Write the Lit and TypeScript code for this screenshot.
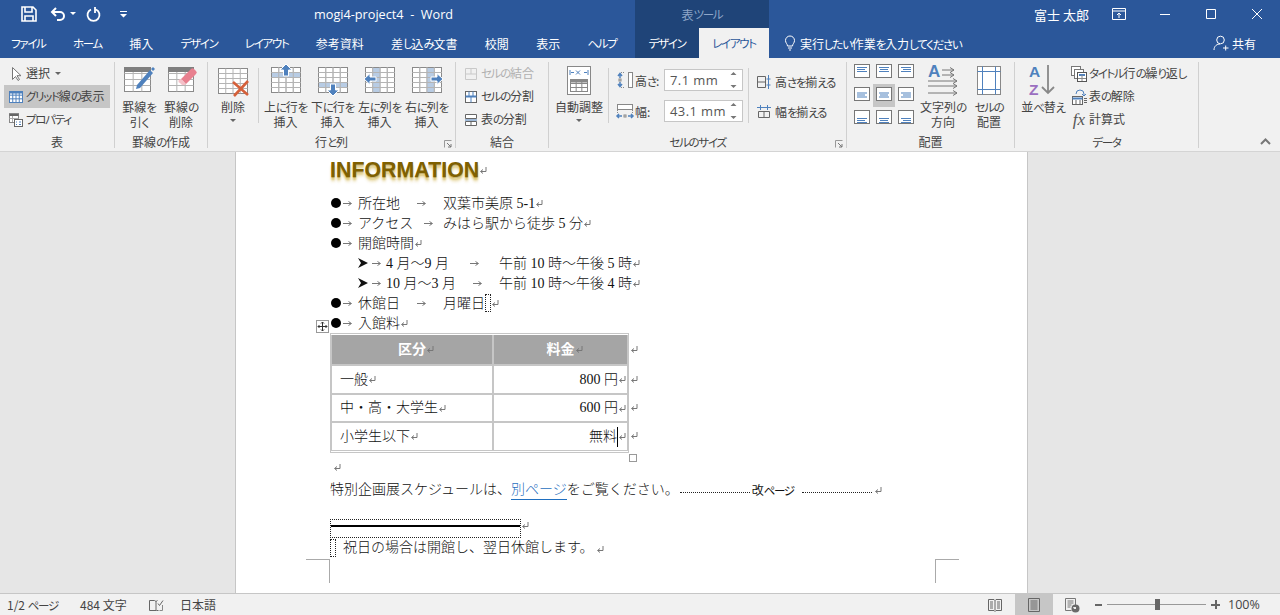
import { LitElement, html, css, svg } from "lit";
import { customElement } from "lit/decorators.js";

const G = "#8a8a8a";
const L = "#b4b4b4";
const B = "#4f81bd";
const BAND = "#b8cce4";

const K = (s: string) => s.split(/([\u3040-\u30ff]+)/).map((p, i) => (i % 2 ? html`<span class="kn">${p}</span>` : p));

const grid = (x: number, y: number, w: number, h: number, cols: number, rows: number, c = L) => {
  const parts: unknown[] = [];
  for (let i = 1; i < cols; i++) {
    const px = x + (w * i) / cols;
    parts.push(svg`<line x1=${px} x2=${px} y1=${y} y2=${y + h} stroke=${c}/>`);
  }
  for (let j = 1; j < rows; j++) {
    const py = y + (h * j) / rows;
    parts.push(svg`<line x1=${x} x2=${x + w} y1=${py} y2=${py} stroke=${c}/>`);
  }
  return parts;
};

const tableBox = (x: number, y: number, w: number, h: number, cols: number, rows: number) => svg`
  <rect x=${x + 0.5} y=${y + 0.5} width=${w} height=${h} fill="#fff" stroke=${G}/>
  ${grid(x + 0.5, y + 0.5, w, h, cols, rows)}`;

const big = (content: unknown) => html`<svg class="i32" viewBox="0 0 32 32">${content}</svg>`;
const small = (content: unknown) => html`<svg class="i16" viewBox="0 0 16 16">${content}</svg>`;

const icons = {
  save: html`<svg class="qat" viewBox="0 0 16 16"><path d="M1 1h11l3 3v11H1z M4 1v5h7V1 M4 15v-5h8v5" fill="none" stroke="#fff" stroke-width="1.6"/></svg>`,
  undo: html`<svg class="qat" viewBox="0 0 16 16"><path d="M2 6h8a4 4 0 0 1 0 8H7 M6 2L2 6l4 4" fill="none" stroke="#fff" stroke-width="2"/></svg>`,
  redo: html`<svg class="qat" viewBox="0 0 16 16"><path d="M5 3.500a6 6 0 1 0 5 0 M9 1v6" fill="none" stroke="#fff" stroke-width="1.8"/></svg>`,
  caret: html`<svg class="car" viewBox="0 0 6 4"><path d="M0 0h6L3 3z" fill="currentColor"/></svg>`,
  qatDrop: html`<svg class="car2" viewBox="0 0 7 7"><path d="M0 0h7v1H0z M0 3h7L3.500 6.500z" fill="#fff"/></svg>`,
  display: html`<svg class="i16" viewBox="0 0 16 16"><path d="M1.500 2.500h13v11h-13z M1.500 5h13 M8 12V7 M6 9l2-2 2 2" fill="none" stroke="#fff"/></svg>`,
  min: html`<svg class="i16" viewBox="0 0 16 16"><path d="M3 8.500h10" stroke="#fff"/></svg>`,
  max: html`<svg class="i16" viewBox="0 0 16 16"><path d="M3.500 3.500h9v9h-9z" fill="none" stroke="#fff"/></svg>`,
  close: html`<svg class="i16" viewBox="0 0 16 16"><path d="M3 3l10 10M13 3L3 13" stroke="#fff"/></svg>`,
  bulb: html`<svg class="i16" viewBox="0 0 16 16"><path d="M5.500 11c0-2-2-3-2-5.500a4.500 4.500 0 0 1 9 0c0 2.500-2 3.500-2 5.500z M6 13h4 M7 15h2" fill="none" stroke="#fff"/></svg>`,
  person: html`<svg class="i16" viewBox="0 0 16 16"><circle cx="7.500" cy="5" r="3.800" fill="none" stroke="#fff"/><path d="M1 15c0-4 3-6 6-6 M10 13h5.500 M12.700 10.500v5" fill="none" stroke="#fff"/></svg>`,
  select: small(svg`<path d="M4.500 1.500v12l3-3 2.500 4 1.500-1-2.500-3.800h4z" fill="#fff" stroke="#777"/>`),
  gridlines: small(svg`<rect x="1.500" y="2.500" width="13" height="11" fill="#fff" stroke="${B}"/>${grid(1.5, 2.5, 13, 11, 4, 3, B)}<rect x="1.500" y="2.500" width="13" height="2" fill="${B}"/>`),
  props: small(svg`<rect x="1.500" y="1.500" width="9" height="9" fill="#fff" stroke="#888"/><path d="M1.500 3h9" stroke="#666" stroke-width="2"/><path d="M4.500 4v6M1.500 6.500h9" stroke="#aaa"/><rect x="6.500" y="7.500" width="8" height="7" fill="#fff" stroke="#666"/><path d="M8 10h1M11 10h2M8 12.500h1M11 12.500h2" stroke="${B}"/>`),
  drawTable: big(svg`${tableBox(1, 3, 26, 24, 3, 4)}<rect x="1" y="3" width="27" height="5" fill="#7f7f7f"/><path d="M14 21l-1 4 4-1L30 9l-3-3z" fill="${B}"/><path d="M28 5l2-2 2 2-2 2z" fill="${B}"/>`),
  erase: big(svg`${tableBox(3, 3, 25, 24, 3, 4)}<rect x="3" y="3" width="26" height="5" fill="#7f7f7f"/><path d="M16 15l10-10a2 2 0 0 1 3 0l2 2a2 2 0 0 1 0 3L21 20z" fill="#e8808f"/><path d="M16 15l5 5-1 1h-3l-2-2a2 2 0 0 1 1-4z" fill="#f4c0c8"/>`),
  del: big(svg`${tableBox(1, 4, 29, 25, 4, 5)}<path d="M16 18l15 13M31 17L17 32" stroke="#d5603a" stroke-width="2.600"/>`),
  above: big(svg`${tableBox(1, 3, 29, 25, 4, 5)}<rect x="2" y="8" width="28" height="5" fill="${BAND}"/>${grid(1.5, 3.5, 29, 25, 4, 5)}<path d="M16 0l6 6h-3.500v6h-5V6H10z" fill="${B}" stroke="#fff"/>`),
  below: big(svg`${tableBox(1, 3, 29, 25, 4, 5)}<rect x="2" y="19" width="28" height="5" fill="${BAND}"/>${grid(1.5, 3.5, 29, 25, 4, 5)}<path d="M16 32l-6-6h3.500v-6h5v6H22z" fill="${B}" stroke="#fff"/>`),
  left: big(svg`${tableBox(1, 3, 29, 25, 4, 5)}<rect x="9" y="4" width="7" height="24" fill="${BAND}"/>${grid(1.5, 3.5, 29, 25, 4, 5)}<path d="M0 15l6-5.500v3.500h6v4H6v3.500z" fill="${B}" stroke="#fff"/>`),
  right: big(svg`${tableBox(1, 3, 29, 25, 4, 5)}<rect x="16" y="4" width="7" height="24" fill="${BAND}"/>${grid(1.5, 3.5, 29, 25, 4, 5)}<path d="M32 15l-6-5.500v3.500h-6v4h6v3.500z" fill="${B}" stroke="#fff"/>`),
  merge: small(svg`<path d="M2.500 2.500h11v11h-11z M2.500 8h11 M8 2.500V8" fill="none" stroke="#c9c9c9"/>`),
  split: small(svg`<rect x="2.500" y="2.500" width="11" height="11" fill="#fff" stroke="#666"/><path d="M2.500 7.500h11" stroke="${B}" stroke-width="2"/><path d="M6 2.500V8M10 2.500V8M8 8v5.500" stroke="${B}"/>`),
  tblSplit: small(svg`<path d="M2.500 2.500h11v4h-11z M2.500 9.500h11v4h-11z M8 9.500v4" fill="#fff" stroke="#666"/><path d="M2 8h12" stroke="${B}"/>`),
  autofit: big(svg`<rect x="4.500" y="2.500" width="23" height="28" fill="#fff" stroke="#888"/><path d="M7 6v5M25 6v5M8 8.500h3M21 8.500h3M13 6.500l4 4M17 6.500l-4 4" stroke="${B}"/>${grid(7.5, 15.5, 17, 12, 3, 3, "#888")}<rect x="7.500" y="15.500" width="17" height="12" fill="none" stroke="#888"/><rect x="7.500" y="15.500" width="17" height="3" fill="#888"/>`),
  height: html`<svg class="i18" viewBox="0 0 18 18"><path d="M4 3v4M2 5l2-2.500L6 5 M4 15v-4M2 13l2 2.500L6 13" fill="none" stroke="${B}" stroke-width="1.500"/><path d="M8 1.500H4M8 16.500H4" stroke="#888" stroke-dasharray="1 1"/><rect x="3" y="8" width="2" height="2" fill="none" stroke="#888"/><rect x="12.500" y="1.500" width="4" height="15" fill="#fff" stroke="#888"/></svg>`,
  width: html`<svg class="i18" viewBox="0 0 18 18"><rect x="1.500" y="2.500" width="15" height="5" fill="#fff" stroke="#888"/><path d="M1 14h5M3 12l-2 2 2 2 M17 14h-5M15 12l2 2-2 2" fill="none" stroke="${B}" stroke-width="1.500"/><rect x="8" y="13" width="2" height="2" fill="none" stroke="#888"/><path d="M1.500 8v3M16.500 8v3" stroke="#888" stroke-dasharray="1 1"/></svg>`,
  eqH: small(svg`<path d="M1.500 2.500h8v11h-8z M1.500 8h8" fill="none" stroke="#666"/><path d="M12.500 1v14M10.500 5h4M10.500 11h4" stroke="${B}"/>`),
  eqW: small(svg`<path d="M2.500 7.500h11v6h-11z M8 7.500v6" fill="none" stroke="#666"/><path d="M1 3.500h14M4.500 1v5M11.500 1v5" stroke="${B}"/>`),
  dir: big(svg`<text x="1" y="13" class="a-blue" font-size="17">A</text><path d="M15 6h12M23 3.500l4 2.500-4 2.500 M15 11h12M23 8.500l4 2.500-4 2.500 M1 17h29M26 14.500l4 2.500-4 2.500 M1 22h29M26 19.500l4 2.500-4 2.500 M1 29h29M26 26.500l4 2.500-4 2.500" fill="none" stroke="#777"/>`),
  cellAlign: big(svg`<rect x="4.500" y="2.500" width="23" height="28" fill="#fff" stroke="#888"/><path d="M9.500 2.500v28M22.500 2.500v28M4.500 7.500h23M4.500 25.500h23" stroke="${B}"/>`),
  sort: big(svg`<text x="2" y="12.500" class="a-blue" font-size="15.500">A</text><text x="2" y="30.500" class="a-purple" font-size="15.500">Z</text><path d="M21 1v28M15 23l6 6 6-6" fill="none" stroke="#888" stroke-width="1.800"/>`),
  repeat: small(svg`<rect x="0.500" y="0.500" width="9" height="9" fill="#fff" stroke="#777"/><rect x="3.500" y="3.500" width="9" height="9" fill="#fff" stroke="#777"/><rect x="6.500" y="6.500" width="9" height="9" fill="#fff" stroke="#555"/><path d="M8 9h6" stroke="${B}" stroke-width="2"/><path d="M11 9v6M7 12.500h8" stroke="#888"/>`),
  convert: small(svg`<rect x="1.500" y="7.500" width="10" height="8" fill="#fff" stroke="#666"/><path d="M1.500 9.500h10" stroke="${B}" stroke-width="2"/><path d="M4 12h2M8 12h2M4 14h2M8 14h2" stroke="#666"/><path d="M5 5a4 4 0 0 1 8 0v2M11 5l2 2 2-2" fill="none" stroke="${B}"/><path d="M13 9.500h3M13 11.500h3M13 13.500h3" stroke="#666"/>`),
  launcher: html`<svg class="launch" viewBox="0 0 8 8"><path d="M0.500 0.500h7M0.500 0.500v7" stroke="#999"/><path d="M3 3l4 4M7 4v3H4" fill="none" stroke="#777"/></svg>`,
  chevron: html`<svg class="chev" viewBox="0 0 11 7"><path d="M1 6l4.500-4.500L10 6" fill="none" stroke="#777" stroke-width="2"/></svg>`,
  spin: html`<svg class="spin" viewBox="0 0 7 20"><path d="M0.500 5L3.500 2l3 3z M0.500 15l3 3 3-3z" fill="#777"/></svg>`,
  ret: html`<svg class="ret" viewBox="0 0 8 9"><path d="M7 1v4.500H2 M4 3.500L1.500 5.500 4 7.500" fill="none" stroke="#777"/></svg>`,
  tab: html`<svg class="tab" viewBox="0 0 9 7"><path d="M0 3.500h8M5.500 1.500L8.500 3.500 5.500 5.500" fill="none" stroke="#777"/></svg>`,
  sub: html`<svg class="sub" viewBox="0 0 10 10"><path d="M0 0L10 5 0 10 3 5z" fill="#111"/></svg>`,
  move: html`<svg class="mv" viewBox="0 0 9 9"><path d="M4.500 0v9M0 4.500h9M3 1.500L4.500 0 6 1.500M3 7.500L4.500 9 6 7.500M1.500 3L0 4.500 1.500 6M7.500 3L9 4.500 7.500 6" fill="none" stroke="#333"/></svg>`,
  book: html`<svg class="i16" viewBox="0 0 16 16"><path d="M1.500 3.500h5l1.500 1 1.500-1M8 4.500v9.500M1.500 3.500v10h6.500M8.500 13.500h2" fill="none" stroke="#666"/><path d="M10 6.500l1.500 2 3.500-5" fill="none" stroke="#666"/><path d="M14.500 8v5.500h-3" fill="none" stroke="#888"/></svg>`,
  read: html`<svg class="i16" viewBox="0 0 16 16"><path d="M1.500 2.500h5.500l1 1 1-1h5.500v11H9l-1 1-1-1H1.500z M8 3.500v10 M3 5h3M3 7h3M3 9h3M3 11h3M10 5h3M10 7h3M10 9h3M10 11h3" fill="none" stroke="#666"/></svg>`,
  print: html`<svg class="i16" viewBox="0 0 16 16"><path d="M2.500 1.500h11v13h-11z M4.500 4h7M4.500 6h7M4.500 8h7M4.500 10h7M4.500 12h7" fill="none" stroke="#666"/></svg>`,
  web: html`<svg class="i16" viewBox="0 0 16 16"><path d="M1.500 1.500h10v9M1.500 1.500v12h6 M3.500 4h6M3.500 6h6M3.500 8h4M3.500 10h3" fill="none" stroke="#777"/><circle cx="11.500" cy="11.500" r="4" fill="#6a6a6a"/><path d="M9 10h3v2h-2z" fill="#eee"/></svg>`,
};

const alignCell = (h: number, v: number, on = false) => {
  const y0 = [3, 5.5, 8][v];
  const lines = [0, 1, 2].map((i) => {
    const wide = i === 1 ? 8 : 10;
    const x = h === 0 ? 3 : h === 1 ? 8 - wide / 2 : 13 - wide;
    return svg`<line x1=${x} x2=${x + wide} y1=${y0 + i * 2 + 0.5} y2=${y0 + i * 2 + 0.5} stroke=${B}/>`;
  });
  return html`<div class="cell ${on ? "on" : ""}"><svg class="al" viewBox="0 0 16 14"><rect x="0.500" y="0.500" width="15" height="13" fill="#fff" stroke="#777"/>${lines}</svg></div>`;
};

const bigBtn = (icon: unknown, l1: string, l2: string | null, cls: string, caret = false) => html`
  <div class="big ${cls}">${icon}<div class="big-l">${K(l1)}</div>${l2 ? html`<div class="big-l">${K(l2)}</div>` : ""}${caret ? html`<div class="big-c">${icons.caret}</div>` : ""}</div>`;

const row = (icon: unknown, text: string, cls = "") => html`<div class="row ${cls}">${icon}<span>${K(text)}</span></div>`;

const tabNames = ["ファイル", "ホーム", "挿入", "デザイン", "レイアウト", "参考資料", "差し込み文書", "校閲", "表示", "ヘルプ"];

@customElement("app-root")
export class AppRoot extends LitElement {
  static styles = css`
    :host { display: flex; flex-direction: column; width: 1280px; height: 615px; overflow: hidden; position: relative;
      font-family: "Noto Sans CJK JP", sans-serif; font-size: 12px; color: #444; font-feature-settings: "palt"; }
    svg { display: block; flex: none; overflow: visible; }
    .kn { font-size: 11.500px; letter-spacing: -1.300px; }
    .i16 { width: 16px; height: 16px; } .i18 { width: 18px; height: 18px; } .i32 { width: 32px; height: 32px; }
    .qat { width: 16px; height: 16px; } .car { width: 6px; height: 4px; } .car2 { width: 7px; height: 7px; }
    .a-blue { fill: #4f81bd; font-family: "Liberation Sans"; font-weight: 700; }
    .a-purple { fill: #9b6fc0; font-family: "Liberation Sans"; font-weight: 700; }

    .title { height: 28px; background: #2b579a; display: flex; align-items: center; color: #fff; flex: none; }
    .qa { width: 314px; flex: none; display: flex; align-items: center; padding-left: 21px; box-sizing: border-box; }
    .qa .u { margin-left: 13px; } .qa .c { margin-left: 4px; } .qa .r { margin-left: 10px; } .qa .d { margin-left: 18px; }
    .docname { width: 321px; flex: none; font-family: "Open Sans", sans-serif; font-size: 12.700px; white-space: pre; font-feature-settings: normal; }
    .ctx { width: 134px; flex: none; height: 28px; background: #1f4478; color: #8ea6c8; display: flex; align-items: center; justify-content: center; font-size: 12px; }
    .user { margin-left: 265px; width: 62px; flex: none; font-size: 13px; font-feature-settings: normal; }
    .win { display: flex; flex: none; } .win > div { width: 46px; display: flex; justify-content: center; }

    .tabs { height: 30px; background: #2b579a; display: flex; align-items: stretch; color: #fff; flex: none; }
    .tleft { width: 635px; flex: none; display: flex; align-items: center; padding-left: 11px; box-sizing: border-box; gap: 27.300px; white-space: nowrap; }
    .tb { display: flex; align-items: center; justify-content: center; flex: none; }
    .tb.dk { background: #1f4478; width: 64px; }
    .tb.act { background: #f1f1f1; color: #2b579a; width: 70px; }
    .tell { margin-left: 13px; display: flex; align-items: center; gap: 2px; }
    .share { margin-left: auto; margin-right: 24px; display: flex; align-items: center; gap: 3px; font-size: 12px; }

    .ribbon { height: 94px; background: #f1f1f1; border-bottom: 1px solid #d4d4d4; box-sizing: border-box; padding-top: 4px; display: flex; flex: none; }
    .grp { height: 86px; border-right: 1px solid #d0d0d0; box-sizing: border-box; position: relative; display: flex; flex-direction: column; flex: none; }
    .body { height: 74px; display: flex; }
    .lab { height: 12px; line-height: 12px; text-align: center; font-size: 12px; white-space: nowrap; }
    .launch { position: absolute; right: 3px; bottom: 0px; width: 8px; height: 8px; }
    .g1 { width: 115px; } .g2 { width: 93px; } .g3 { width: 248px; } .g4 { width: 93px; } .g5 { width: 298px; } .g6 { width: 168px; } .g7 { width: 184px; }
    .g1 .body { flex-direction: column; padding-left: 4px; }
    .g2 .body { padding-left: 3px; }
    .g4 .body { flex-direction: column; padding-left: 7px; }
    .g5 .body { padding-left: 1px; }
    .g6 .body { padding-left: 4px; }
    .g7 .body { padding-left: 3px; }
    .row { height: 23px; display: flex; align-items: center; gap: 2px; white-space: nowrap; }
    .row > span { padding-bottom: 2px; }
    .g1 .row { width: 106px; padding-left: 4px; box-sizing: border-box; }
    .row.on { background: #c6c6c6; }
    .row .car { margin-left: 3px; color: #666; }
    .row.off { color: #b0b0b0; }
    .big { display: flex; flex-direction: column; align-items: center; padding-top: 2px; white-space: nowrap; flex: none; }
    .big-l { line-height: 15px; height: 15px; }
    .big > svg { margin-bottom: 2.500px; }
    .big-c { color: #666; margin-top: 5px; }
    .w42 { width: 42px; } .w47 { width: 47px; } .w50 { width: 50px; } .w58 { width: 58px; } .w52 { width: 52px; } .w40 { width: 40px; }
    .vsep { width: 1px; background: #d0d0d0; margin: 6px 0 13px; flex: none; }
    .v3 { margin-right: 3px; }
    .sizes { margin-left: 7px; padding-top: 7px; display: flex; flex-direction: column; gap: 9px; margin-right: 5px; flex: none; }
    .sz { display: flex; align-items: center; height: 22px; }
    .sz .nm { width: 30px; padding-left: 1px; box-sizing: border-box; flex: none; }
    .inp { width: 79px; height: 22px; box-sizing: border-box; border: 1px solid #c6c6c6; background: #fff; display: flex; align-items: center; justify-content: space-between; padding: 0 5px; font-family: "Open Sans", sans-serif; font-size: 13px; color: #555; font-feature-settings: normal; letter-spacing: .4px; }
    .spin { width: 7px; height: 20px; }
    .eq { margin-left: 7px; padding-top: 9px; display: flex; flex-direction: column; gap: 8px; }
    .eq .row { height: 22px; gap: 3px; }
    .aligns { display: grid; grid-template-columns: repeat(3, 22px); grid-template-rows: repeat(3, 23px); margin-top: -1px; flex: none; }
    .cell { display: flex; align-items: flex-start; justify-content: center; padding-top: 3px; box-sizing: border-box; }
    .cell.on { background: #c6c6c6; }
    .al { width: 16px; height: 14px; }
    .g7 .col { margin-left: 2px; display: flex; flex-direction: column; }
    .g7 .row { padding-left: 1px; }
    .fx { width: 16px; text-align: center; font-family: "Liberation Serif", serif; font-style: italic; font-size: 17px; line-height: 16px; color: #555; }
    .chev { position: absolute; right: 9px; top: 138px; width: 11px; height: 7px; }

    .doc { flex: 1; background: #e6e6e6; overflow: hidden; display: flex; min-height: 0; }
    .page { margin-left: 235px; width: 793px; flex: none; background: #fff; border: solid #c6c6c6; border-width: 0 1px; box-sizing: border-box; padding-left: 94px; position: relative; color: #111;
      font-family: "Liberation Serif", "Noto Sans CJK JP", serif; font-size: 14px; font-weight: 300; font-feature-settings: normal; }
    .h1 { height: 36px; margin-bottom: 5px; display: flex; align-items: center; }
    .h1 b { font-family: "Liberation Sans", sans-serif; font-size: 21.400px; font-weight: 700; color: #7f6000; line-height: 36px;
      text-shadow: 0 1px 0 rgba(127,96,0,.35), 0 3px 2px rgba(191,150,0,.45), 0 5px 3px rgba(191,150,0,.22); }
    .ret { width: 8px; height: 9px; flex: none; }
    .tab { width: 9px; height: 7px; flex: none; }
    .sub { width: 10px; height: 10px; flex: none; }
    .ln { height: 20px; line-height: 20px; display: flex; align-items: center; white-space: nowrap; }
    .ln > span, .c1 > span, .c2 > span { position: relative; top: 1px; }
    .bl { width: 28px; display: flex; align-items: center; gap: 2px; padding-left: 1px; box-sizing: border-box; flex: none; }
    .dot { width: 10px; height: 10px; background: #000; border-radius: 50%; flex: none; }
    .c1 { width: 85px; display: flex; align-items: center; flex: none; }
    .c1 .tab { margin: auto; }
    .ln.s { padding-left: 28px; }
    .sb { width: 28px; display: flex; align-items: center; gap: 4px; flex: none; }
    .c2 { width: 113px; display: flex; align-items: center; flex: none; }
    .c2 .tab { margin: auto; }
    .ln > span.dots { width: 6px; height: 18px; border: 1px dotted #222; box-sizing: border-box; flex: none; top: 0; }
    .tw { display: flex; }
    .tbl { width: 299px; flex: none; box-sizing: border-box; border: 1px solid #c6c6c6; padding: 1px 0 1px; }
    .tg { display: grid; grid-template-columns: 160px 133px; grid-template-rows: 29px 27px 26px 27px; gap: 2px; background: #c6c6c6; padding: 0 1px 1px; }
    .td { background: #fff; display: flex; align-items: center; padding: 0 1px 0 8px; box-sizing: border-box; white-space: nowrap; line-height: 20px; }
    .td.r { justify-content: flex-end; }
    .th { background: #a5a5a5; color: #fff; font-weight: 700; display: flex; align-items: center; justify-content: center; line-height: 20px; }
    .th .ret { margin-right: -8px; }
    .cursor { width: 1px; height: 20px; background: #000; flex: none; }
    .marks { display: grid; grid-template-rows: 31px 28px 28px 28px; margin-left: 1px; padding-top: 1px; align-items: center; }
    .ln.after { margin-top: 4px; padding-left: 3px; }
    .ln.para { margin-top: 3px; }
    .ln.para > span { top: 0; }
    .ln > span.a { color: #1f6fc0; border-bottom: 1px solid #1f6fc0; line-height: 18px; top: 0; }
    .ln.para > span.pb { width: 70px; border-top: 1px dotted #222; flex: none; top: 2px; }
    .ln > span.pb1 { margin: 0 2px 0 1px; } .ln > span.pb2 { margin: 0 2px 0 8px; }
    .pbt { font-family: "Noto Sans CJK JP", sans-serif; font-size: 12px; font-weight: 400; color: #111; font-feature-settings: "palt"; width: 42px; flex: none; letter-spacing: -.2px; }
    .boxln { margin-top: 19px; display: flex; align-items: flex-start; }
    .box { width: 191px; height: 19px; border: 1px dotted #222; box-sizing: border-box; padding-top: 5px; }
    .box div { height: 1.500px; background: #000; }
    .boxln .ret { margin-top: 2px; }
    .fn { margin-top: 1px; gap: 7px; }
    .ln.fn > span { top: -1px; }
    .fn .ret { margin-left: -5px; }
    .mvbox { position: absolute; left: 80px; top: 168px; width: 13px; height: 13px; box-sizing: border-box; border: 1px solid #999; background: #fff; display: flex; align-items: center; justify-content: center; }
    .mv { width: 9px; height: 9px; }
    .rz { position: absolute; left: 393px; top: 302px; width: 8px; height: 8px; border: 1px solid #999; box-sizing: border-box; background: #fff; }
    .crop { position: absolute; width: 24px; height: 24px; top: 407px; border-top: 1px solid #aaa; box-sizing: border-box; }
    .crop.lf { left: 70px; border-right: 1px solid #aaa; }
    .crop.rt { left: 699px; border-left: 1px solid #aaa; }

    .status { height: 22px; background: #f1f1f1; border-top: 1px solid #c6c6c6; box-sizing: border-box; display: flex; align-items: center; flex: none; color: #444; }
    .st1 { margin-left: 7px; width: 73px; flex: none; } .st2 { width: 68px; flex: none; } .st3 { width: 32px; flex: none; } .st4 { width: 50px; flex: none; }
    .stv { margin-left: auto; display: flex; align-items: center; height: 21px; }
    .stv > div { display: flex; align-items: center; justify-content: center; height: 21px; flex: none; }
    .v1 { width: 40px; } .v2 { width: 38px; background: #c6c6c6; } .v3b { width: 38px; }
    .stv > .zm { width: 129px; padding-left: 4px; box-sizing: border-box; justify-content: flex-start; }
    .zm-minus { width: 7px; height: 2px; background: #666; flex: none; }
    .zm-track { width: 99px; height: 1px; background: #999; margin: 0 5px; position: relative; flex: none; }
    .zm-thumb { position: absolute; left: 48px; top: -5px; width: 5px; height: 11px; background: #666; }
    .zm-plus { width: 9px; height: 9px; flex: none; background: linear-gradient(#666,#666) center/9px 2px no-repeat, linear-gradient(#666,#666) center/2px 9px no-repeat; }
    .stv > .pct { width: 60px; justify-content: flex-start; padding-left: 8px; box-sizing: border-box; font-size: 12.500px; font-family: "Open Sans", sans-serif; font-feature-settings: normal; white-space: nowrap; }
  `;

  render() {
    const i = icons;
    return html`
      <div class="title">
        <div class="qa">${i.save}<span class="u">${i.undo}</span><span class="c">${i.caret}</span><span class="r">${i.redo}</span><span class="d">${i.qatDrop}</span></div>
        <div class="docname">mogi4-project4  -  Word</div>
        <div class="ctx">${K("表ツール")}</div>
        <div class="user">富士 太郎</div>
        <div class="win"><div>${i.display}</div><div>${i.min}</div><div>${i.max}</div><div>${i.close}</div></div>
      </div>
      <div class="tabs">
        <div class="tleft">${tabNames.map((n) => html`<div class="tb">${K(n)}</div>`)}</div>
        <div class="tb dk">${K("デザイン")}</div><div class="tb act">${K("レイアウト")}</div>
        <div class="tell">${i.bulb}<span>${K("実行したい作業を入力してください")}</span></div>
        <div class="share">${i.person}<span>共有</span></div>
      </div>
      <div class="ribbon">
        <div class="grp g1"><div class="body">
          <div class="row">${i.select}<span>選択</span>${i.caret}</div>
          ${row(i.gridlines, "グリッド線の表示", "on")}
          ${row(i.props, "プロパティ")}
        </div><div class="lab">表</div></div>
        <div class="grp g2"><div class="body">
          ${bigBtn(i.drawTable, "罫線を", "引く", "w42")}
          ${bigBtn(i.erase, "罫線の", "削除", "w42")}
        </div><div class="lab">${K("罫線の作成")}</div></div>
        <div class="grp g3"><div class="body">
          ${bigBtn(i.del, "削除", null, "w50", true)}
          <div class="vsep v3"></div>
          ${bigBtn(i.above, "上に行を", "挿入", "w47")}
          ${bigBtn(i.below, "下に行を", "挿入", "w47")}
          ${bigBtn(i.left, "左に列を", "挿入", "w47")}
          ${bigBtn(i.right, "右に列を", "挿入", "w47")}
        </div><div class="lab">${K("行と列")}</div>${i.launcher}</div>
        <div class="grp g4"><div class="body">
          ${row(i.merge, "セルの結合", "off")}
          ${row(i.split, "セルの分割")}
          ${row(i.tblSplit, "表の分割")}
        </div><div class="lab">結合</div></div>
        <div class="grp g5"><div class="body">
          ${bigBtn(i.autofit, "自動調整", null, "w58", true)}
          <div class="vsep"></div>
          <div class="sizes">
            <div class="sz">${i.height}<span class="nm">${K("高さ")}:</span><div class="inp"><span>7.1 mm</span>${i.spin}</div></div>
            <div class="sz">${i.width}<span class="nm">幅:</span><div class="inp"><span>43.1 mm</span>${i.spin}</div></div>
          </div>
          <div class="vsep"></div>
          <div class="eq">
            ${row(i.eqH, "高さを揃える")}
            ${row(i.eqW, "幅を揃える")}
          </div>
        </div><div class="lab">${K("セルのサイズ")}</div>${i.launcher}</div>
        <div class="grp g6"><div class="body">
          <div class="aligns">
            ${alignCell(0, 0)}${alignCell(1, 0)}${alignCell(2, 0)}
            ${alignCell(0, 1)}${alignCell(1, 1, true)}${alignCell(2, 1)}
            ${alignCell(0, 2)}${alignCell(1, 2)}${alignCell(2, 2)}
          </div>
          ${bigBtn(i.dir, "文字列の", "方向", "w52")}
          ${bigBtn(i.cellAlign, "セルの", "配置", "w40")}
        </div><div class="lab">配置</div></div>
        <div class="grp g7"><div class="body">
          ${bigBtn(i.sort, "並べ替え", null, "w50")}
          <div class="col">
            ${row(i.repeat, "タイトル行の繰り返し")}
            ${row(i.convert, "表の解除")}
            <div class="row"><div class="fx">fx</div><span>計算式</span></div>
          </div>
        </div><div class="lab">${K("データ")}</div></div>
        ${i.chevron}
      </div>
      <div class="doc">
        <div class="page">
          <div class="h1"><b>INFORMATION</b>${i.ret}</div>
          <div class="ln"><div class="bl"><span class="dot"></span>${i.tab}</div><div class="c1"><span>所在地</span>${i.tab}</div><span>双葉市美原 5-1</span>${i.ret}</div>
          <div class="ln"><div class="bl"><span class="dot"></span>${i.tab}</div><div class="c1"><span>アクセス</span>${i.tab}</div><span>みはら駅から徒歩 5 分</span>${i.ret}</div>
          <div class="ln"><div class="bl"><span class="dot"></span>${i.tab}</div><span>開館時間</span>${i.ret}</div>
          <div class="ln s"><div class="sb">${i.sub}${i.tab}</div><div class="c2"><span>4 月～9 月</span>${i.tab}</div><span>午前 10 時～午後 5 時</span>${i.ret}</div>
          <div class="ln s"><div class="sb">${i.sub}${i.tab}</div><div class="c2"><span>10 月～3 月</span>${i.tab}</div><span>午前 10 時～午後 4 時</span>${i.ret}</div>
          <div class="ln"><div class="bl"><span class="dot"></span>${i.tab}</div><div class="c1"><span>休館日</span>${i.tab}</div><span>月曜日</span><span class="dots"></span>${i.ret}</div>
          <div class="ln"><div class="bl"><span class="dot"></span>${i.tab}</div><span>入館料</span>${i.ret}</div>
          <div class="tw">
            <div class="tbl"><div class="tg">
              <div class="th"><span>区分</span>${i.ret}</div><div class="th"><span>料金</span>${i.ret}</div>
              <div class="td"><span>一般</span>${i.ret}</div><div class="td r"><span>800 円</span>${i.ret}</div>
              <div class="td"><span>中・高・大学生</span>${i.ret}</div><div class="td r"><span>600 円</span>${i.ret}</div>
              <div class="td"><span>小学生以下</span>${i.ret}</div><div class="td r"><span>無料</span><span class="cursor"></span>${i.ret}</div>
            </div></div>
            <div class="marks">${i.ret}${i.ret}${i.ret}${i.ret}</div>
          </div>
          <div class="ln after">${i.ret}</div>
          <div class="ln para"><span>特別企画展スケジュールは、</span><span class="a">別ページ</span><span>をご覧ください。</span><span class="pb pb1"></span><span class="pbt">${K("改ページ")}</span><span class="pb pb2"></span>${i.ret}</div>
          <div class="boxln"><div class="box"><div></div></div>${i.ret}</div>
          <div class="ln fn"><span class="dots"></span><span>祝日の場合は開館し、翌日休館します。</span>${i.ret}</div>
          <div class="mvbox">${i.move}</div>
          <div class="rz"></div>
          <div class="crop lf"></div>
          <div class="crop rt"></div>
        </div>
      </div>
      <div class="status">
        <span class="st1">${K("1/2 ページ")}</span><span class="st2">484 文字</span><span class="st3">${i.book}</span><span class="st4">日本語</span>
        <div class="stv">
          <div class="v1">${i.read}</div><div class="v2">${i.print}</div><div class="v3b">${i.web}</div>
          <div class="zm"><span class="zm-minus"></span><span class="zm-track"><span class="zm-thumb"></span></span><span class="zm-plus"></span></div>
          <div class="pct">100%</div>
        </div>
      </div>
    `;
  }
}
